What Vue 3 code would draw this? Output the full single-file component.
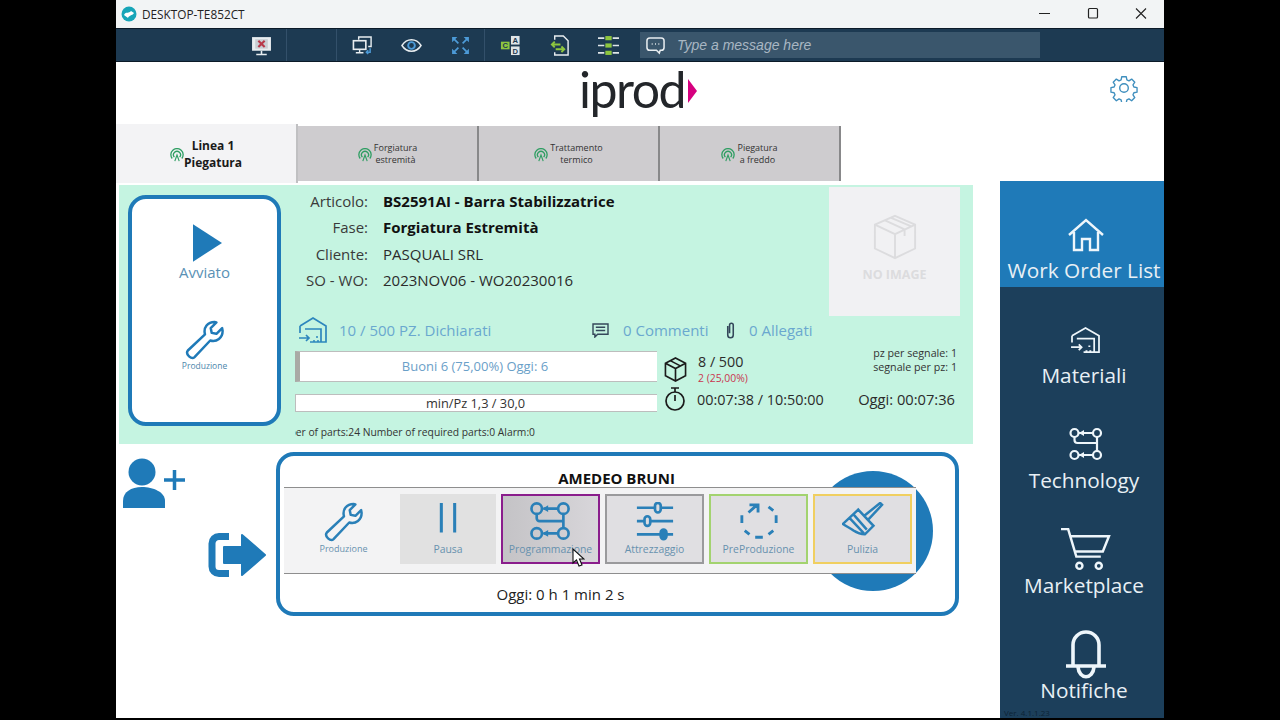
<template>
  <div class="window">
    <div class="titlebar">
      <svg class="app-icon" viewBox="0 0 16 16"><circle cx="8" cy="8" r="7.500" fill="#17a5b8"/><path d="M3 9c2-4 5-1 7-4l3 2c-2 3-5 2-6 5-1-1-3-2-4-3z" fill="#fff"/></svg>
      <span class="host">DESKTOP-TE852CT</span>
      <div class="win-controls">
        <svg viewBox="0 0 48 28"><path d="M18 13.500h11" stroke="#222" fill="none"/></svg>
        <svg viewBox="0 0 48 28"><rect x="19.500" y="8.500" width="9" height="9.500" rx="1" stroke="#222" fill="none" stroke-width="1.200"/></svg>
        <svg viewBox="0 0 48 28"><path d="M19 8.500l10 10M29 8.500l-10 10" stroke="#222" fill="none" stroke-width="1.100"/></svg>
      </div>
    </div>

    <div class="toolbar">
      <div class="tool-group first">
        <svg class="tool" viewBox="0 0 20 20"><rect x="1" y="2" width="18" height="13" fill="#e8edf0"/><rect x="4" y="4" width="12" height="9" fill="#c9ced4"/><path d="M7 5.500l6 6M13 5.500l-6 6" stroke="#b8394a" stroke-width="2"/><path d="M10 15v3M5 18.500h10" stroke="#e8edf0" stroke-width="1.500"/></svg>
      </div>
      <div class="tool-group second">
        <svg class="tool" viewBox="0 0 22 20"><path d="M7 4V1h13v10h-3" stroke="#e8edf0" stroke-width="1.500" fill="none"/><rect x="1.500" y="5" width="13" height="9" stroke="#e8edf0" stroke-width="1.700" fill="#1d3a52"/><path d="M8 14v3M4 17.500h8" stroke="#e8edf0" stroke-width="1.500"/><path d="M19 13v4h-4m2-2l-2 2 2 2" stroke="#4d9bd8" stroke-width="1.500" fill="none"/></svg>
        <svg class="tool" viewBox="0 0 22 20"><path d="M1 10c5-8 15-8 20 0-5 8-15 8-20 0z" stroke="#e8edf0" stroke-width="1.500" fill="none"/><circle cx="11" cy="10" r="3.500" stroke="#4d9bd8" stroke-width="2" fill="none"/></svg>
        <svg class="tool" viewBox="0 0 20 20"><path d="M2 2h5L2 7zM18 2h-5l5 5zM2 18h5l-5-5zM18 18h-5l5-5z" fill="#4d9bd8"/><path d="M3 3l5 5M17 3l-5 5M3 17l5-5M17 17l-5-5" stroke="#4d9bd8" stroke-width="1.600"/></svg>
      </div>
      <div class="tool-group third">
        <svg class="tool" viewBox="0 0 22 22"><rect x="1" y="7" width="9" height="8" fill="#8dc63f"/><rect x="11.500" y="1" width="9" height="9" fill="#dfe5e8"/><rect x="11.500" y="12" width="9" height="9" fill="#dfe5e8"/><text x="5.500" y="13.500" class="cad">C</text><text x="16" y="8.500" class="cad">A</text><text x="16" y="19.500" class="cad">D</text></svg>
        <svg class="tool" viewBox="0 0 20 22"><path d="M5 5V1h9l5 5v15H5v-3" stroke="#e8edf0" stroke-width="1.500" fill="none"/><path d="M2 10h9M5 7l-3 3 3 3" stroke="#8dc63f" stroke-width="2" fill="none"/><path d="M6 15h9M12 12l3 3-3 3" stroke="#8dc63f" stroke-width="2" fill="none"/></svg>
        <svg class="tool" viewBox="0 0 20 20"><path d="M0 3h6M14 3h6M0 10h6M14 10h6M0 17h6M14 17h6" stroke="#dfe5e8" stroke-width="1.600"/><rect x="7" y="1" width="6" height="4" fill="#8dc63f"/><rect x="7" y="8" width="6" height="4" fill="#8dc63f"/><rect x="7" y="15" width="6" height="4" fill="#8dc63f"/></svg>
      </div>
      <div class="msg-box">
        <svg class="chat" viewBox="0 0 20 20"><path d="M4 2h12a3 3 0 0 1 3 3v7a3 3 0 0 1-3 3h-1l-1 3-3-3H4a3 3 0 0 1-3-3V5a3 3 0 0 1 3-3z" stroke="#e8edf0" stroke-width="1.600" fill="none"/><path d="M6 8.500h1M9.500 8.500h1M13 8.500h1" stroke="#e8edf0" stroke-width="1.600"/></svg>
        <span>Type a message here</span>
      </div>
    </div>

    <div class="app-head">
      <div class="logo"><span>iprod</span><i class="logo-arrow"></i></div>
      <svg class="gear" viewBox="0 0 28 28"><path d="M11.500 1.500h5l.7 3.600 2.300 1 3-2 3.500 3.500-2 3 1 2.300 3.500.7v5l-3.500.7-1 2.300 2 3-3.500 3.500-3-2-2.300 1-.7 3.500h-5l-.7-3.500-2.300-1-3 2-3.500-3.500 2-3-1-2.300-3.500-.7v-5l3.500-.7 1-2.300-2-3 3.500-3.500 3 2 2.300-1z" transform="translate(1.400 1.400) scale(.9)" fill="none" stroke="#3f8fbe" stroke-width="1.500" stroke-linejoin="round"/><circle cx="14" cy="14" r="4.300" fill="none" stroke="#3f8fbe" stroke-width="1.400"/></svg>
    </div>

    <div class="main">
      <div class="left">
        <div class="tabs">
          <div v-for="tab in tabs" :key="tab.id" class="tab" :class="{ active: tab.active }">
            <svg class="signal" viewBox="0 0 16 16"><path d="M2.500 12A7 7 0 1 1 13.500 12M5 10.500a4 4 0 1 1 6 0" fill="none" stroke="#2f9e63" stroke-width="1.500"/><path d="M5.500 15L8 8l2.500 7" fill="none" stroke="#2f9e63" stroke-width="1.300"/></svg>
            <div class="tab-label">{{ tab.line1 }}<br />{{ tab.line2 }}</div>
          </div>
        </div>

        <div class="status-panel">
          <div class="state-card">
            <div class="state-item">
              <svg class="play" viewBox="0 0 28 36"><path d="M0 0l28 18L0 36z" fill="#1f7ab8"/></svg>
              <div class="state-text">Avviato</div>
            </div>
            <div class="state-item second-state">
              <svg class="wrench" viewBox="0 0 44 42"><path d="M4 32L22 15c-2-7 3-13 10-13l2 .5-6 6 1 5 5 1 6-6 .5 3c0 7-6 12-13 10L11 39c-3 3-10-3-7-7z" fill="none" stroke="#1f7ab8" stroke-width="2.600" stroke-linejoin="round"/></svg>
              <div class="state-small">Produzione</div>
            </div>
          </div>

          <div class="details">
            <div class="top-row">
              <div class="info">
                <div v-for="row in infoRows" :key="row.label" class="info-row">
                  <span class="info-label">{{ row.label }}</span>
                  <span class="info-value" :class="{ strong: row.strong }">{{ row.value }}</span>
                </div>
              </div>
              <div class="no-image">
                <svg viewBox="0 0 48 48"><path d="M24 2L45 11v25L24 46 3 36V11zM3 11l21 10 21-10M24 21v25M13 6.500L34 16v7M20 4l21 9" fill="none" stroke="#dcdcde" stroke-width="2"/></svg>
                <div>NO IMAGE</div>
              </div>
            </div>

            <div class="links-row">
              <div class="declared">
                <svg class="store" viewBox="0 0 30 26"><path d="M2 9L15 1l13 8v16H12M2 9v7M7 12h16v13" fill="none" stroke="#2d86bd" stroke-width="1.700"/><path d="M1 21h10M8 18l3 3-3 3" fill="none" stroke="#2d86bd" stroke-width="1.700"/><path d="M15 24h2M19 24h2M18 20h2" stroke="#2d86bd" stroke-width="1.700"/></svg>
                <span>10 / 500 PZ. Dichiarati</span>
              </div>
              <div class="link comments">
                <svg viewBox="0 0 18 16"><path d="M1 1h16v11H6l-3 3v-3H1zM4 4.500h10M4 8h10" fill="none" stroke="#34475a" stroke-width="1.500"/></svg>
                <span>0 Commenti</span>
              </div>
              <div class="link attach">
                <svg viewBox="0 0 12 20"><path d="M3 5v10a3 3 0 0 0 6 0V4a2 2 0 0 0-4 0v9" fill="none" stroke="#34475a" stroke-width="1.700"/></svg>
                <span>0 Allegati</span>
              </div>
            </div>

            <div class="bars">
              <div class="bar-col">
                <div class="good-bar">Buoni 6 (75,00%) Oggi: 6</div>
                <div class="time-bar">min/Pz 1,3 / 30,0</div>
              </div>
              <div class="stat-col">
                <div class="stat-top">
                  <svg class="box" viewBox="0 0 24 26"><path d="M12 1l10.500 5.500v13L12 25 1.500 19.500v-13zM1.500 6.500L12 12l10.500-5.500M12 12v13M7 4l10.500 5.500" fill="none" stroke="#1b1b1b" stroke-width="1.700"/></svg>
                  <div>
                    <div class="count">8 / 500</div>
                    <div class="scrap">2 (25,00%)</div>
                  </div>
                  <div class="signal-info">pz per segnale: 1<br />segnale per pz: 1</div>
                </div>
                <div class="stat-bottom">
                  <svg class="timer" viewBox="0 0 22 24"><path d="M7 1h8M11 1v4" stroke="#1b1b1b" stroke-width="1.700"/><circle cx="11" cy="14" r="9" fill="none" stroke="#1b1b1b" stroke-width="1.700"/><path d="M11 8v6" stroke="#1b1b1b" stroke-width="1.700"/></svg>
                  <span class="elapsed">00:07:38 / 10:50:00</span>
                  <span class="today">Oggi: 00:07:36</span>
                </div>
              </div>
            </div>

            <div class="parts-line"><span>Number of parts:24 Number of required parts:0 Alarm:0</span></div>
          </div>
        </div>

        <div class="bottom">
          <div class="actions">
            <svg class="user-add" viewBox="0 0 64 52"><circle cx="20" cy="14" r="13.500" fill="#1f7ab8"/><path d="M1 50V43C1 34 9 29 20 29s23 5 23 14v7z" fill="#1f7ab8"/><path d="M42 22h21M52.500 12v20" stroke="#1f7ab8" stroke-width="3.500"/></svg>
            <svg class="logout" viewBox="0 0 59 44"><path d="M21 3.500H11a7 7 0 0 0-7 7v23a7 7 0 0 0 7 7h10" fill="none" stroke="#1f7ab8" stroke-width="7"/><path d="M16 14h18V2l23 20-23 20V30H16z" fill="#1f7ab8" stroke="#1f7ab8" stroke-width="2" stroke-linejoin="round"/></svg>
          </div>

          <div class="operator">
            <i class="circle"></i>
            <div class="operator-name">AMEDEO BRUNI</div>
            <div class="strip">
              <div v-for="btn in buttons" :key="btn.label" class="op-btn" :class="btn.cls">
                <svg v-if="btn.icon === 'wrench'" class="op-icon" viewBox="0 0 44 42"><path d="M4 32L22 15c-2-7 3-13 10-13l2 .5-6 6 1 5 5 1 6-6 .5 3c0 7-6 12-13 10L11 39c-3 3-10-3-7-7z" fill="none" stroke="#2a80b8" stroke-width="2.600" stroke-linejoin="round"/></svg>
                <svg v-else-if="btn.icon === 'pause'" class="op-icon" viewBox="0 0 44 42"><path d="M15 1v31M29 1v31" stroke="#2a80b8" stroke-width="3.200"/></svg>
                <svg v-else-if="btn.icon === 'flow'" class="op-icon" viewBox="0 0 44 42"><g fill="none" stroke="#2a80b8" stroke-width="2.800"><circle cx="7" cy="7" r="5.500"/><circle cx="35" cy="7" r="5.500"/><circle cx="7" cy="33" r="5.500"/><circle cx="35" cy="33" r="5.500"/><path d="M14 7h15M14 33h15M7 13v4a3 3 0 0 0 3 3h25v7M35 13v7"/></g><path d="M13 7l6-3.500v7zM13 33l6-3.500v7z" fill="#2a80b8"/></svg>
                <svg v-else-if="btn.icon === 'sliders'" class="op-icon" viewBox="0 0 44 42"><g stroke="#2a80b8" stroke-width="2.800" fill="#2a80b8"><path d="M3 6h38M3 20h38M3 34h38"/><rect x="22" y="1" width="6" height="10" rx="3" fill="#dcdce0"/><rect x="11" y="15" width="6" height="10" rx="3" fill="#dcdce0"/><rect x="28" y="29" width="6" height="10" rx="3"/></g></svg>
                <svg v-else-if="btn.icon === 'cycle'" class="op-icon" viewBox="0 0 44 42"><g fill="none" stroke="#2a80b8" stroke-width="3"><path d="M4 14v8M40 14v8M7 30l5 4M18 37h8M37 30l-5 4M32 5l5 4M11 11l9-8M12 3h9v8"/></g></svg>
                <svg v-else class="op-icon" viewBox="0 0 44 42"><g fill="none" stroke="#2a80b8" stroke-width="2.600"><path d="M1 23L17 8l16 17-9 9c-6 0-9-2-12-4-4-3-7-4-11-7zM24 14L40 1l2 2-15 16M8 17l15 16M12 13l14 16" /></g></svg>
                <div class="op-label">{{ btn.label }}</div>
                <svg v-if="btn.cls === 'selected'" class="cursor" viewBox="0 0 13 20"><path d="M1 1v14l3.500-3 2.500 6 3-1-2.500-6H12z" fill="#fff" stroke="#111" stroke-width="1.100"/></svg>
              </div>
            </div>
            <div class="today-total">Oggi: 0 h 1 min 2 s</div>
          </div>
        </div>
      </div>

      <div class="sidebar">
        <div class="side-item current">
          <svg class="i-home" viewBox="0 0 36 34"><path d="M1 17L18 2l17 15M6 14v18h8V21h8v11h8V14" fill="none" stroke="#eef6fb" stroke-width="2.400"/></svg>
          <span>Work Order List</span>
        </div>
        <div class="side-item">
          <svg class="i-store" viewBox="0 0 32 28"><path d="M2 10L16 2l14 8v17H14M2 10v7M7 13h18v14" fill="none" stroke="#eef6fb" stroke-width="1.800"/><path d="M1 22h11M9 19l3 3-3 3" fill="none" stroke="#eef6fb" stroke-width="1.800"/><path d="M16 26h2M20 26h2M19 21h2" stroke="#eef6fb" stroke-width="1.800"/></svg>
          <span>Materiali</span>
        </div>
        <div class="side-item">
          <svg class="i-flow" viewBox="0 0 34 34"><g fill="none" stroke="#eef6fb" stroke-width="2.200"><circle cx="5.500" cy="6" r="4"/><circle cx="28" cy="6" r="4"/><circle cx="5.500" cy="28" r="4"/><circle cx="28" cy="28" r="4"/><path d="M10 6h14M10 28h14M5.500 10v3a3 3 0 0 0 3 3H28v8M28 10v6"/></g><path d="M10 6l5-3v6zM10 28l5-3v6z" fill="#eef6fb"/></svg>
          <span>Technology</span>
        </div>
        <div class="side-item">
          <svg class="i-cart" viewBox="0 0 50 42"><g fill="none" stroke="#eef6fb" stroke-width="2.400"><path d="M1 1h7l8 27h24M10 8h38l-6 15H15"/><circle cx="19" cy="37" r="3"/><circle cx="38" cy="37" r="3"/></g></svg>
          <span>Marketplace</span>
        </div>
        <div class="side-item">
          <svg class="i-bell" viewBox="0 0 40 50"><g fill="none" stroke="#eef6fb" stroke-width="3.600"><path d="M7 36V15a13 13 0 0 1 26 0v21M0 36h40M12 37c1 13 15 13 16 0"/></g></svg>
          <span>Notifiche</span>
        </div>
        <div class="version">Ver. 4.1.1.23</div>
      </div>
    </div>
  </div>
</template>

<script setup>
const tabs = [
  { id: 1, line1: "Linea 1", line2: "Piegatura", active: true },
  { id: 2, line1: "Forgiatura", line2: "estremità" },
  { id: 3, line1: "Trattamento", line2: "termico" },
  { id: 4, line1: "Piegatura", line2: "a freddo" },
];

const infoRows = [
  { label: "Articolo:", value: "BS2591AI - Barra Stabilizzatrice", strong: true },
  { label: "Fase:", value: "Forgiatura Estremità", strong: true },
  { label: "Cliente:", value: "PASQUALI SRL" },
  { label: "SO - WO:", value: "2023NOV06 - WO20230016" },
];

const buttons = [
  { label: "Produzione", icon: "wrench", cls: "plain" },
  { label: "Pausa", icon: "pause", cls: "paused" },
  { label: "Programmazione", icon: "flow", cls: "selected" },
  { label: "Attrezzaggio", icon: "sliders", cls: "gray" },
  { label: "PreProduzione", icon: "cycle", cls: "green" },
  { label: "Pulizia", icon: "brush", cls: "yellow" },
];
</script>

<style>
html,
body {
  background: #000;
}
</style>

<style scoped>
* {
  box-sizing: border-box;
}

.window {
  width: 1048px;
  height: 718px;
  margin-left: 116px;
  background: #fff;
  font-family: "Open Sans", "Noto Sans", sans-serif;
  overflow: hidden;
}

.titlebar {
  height: 28px;
  background: #f2f4f5;
  display: flex;
  align-items: center;
  padding-left: 5px;
}

.app-icon {
  width: 16px;
  height: 16px;
}

.host {
  margin-left: 5px;
  font-size: 11.800px;
  color: #222;
}

.win-controls {
  margin-left: auto;
  margin-right: -1px;
  display: flex;
}

.win-controls svg {
  width: 48px;
  height: 28px;
}

.toolbar {
  height: 34px;
  background: #1d3a52;
  border-top: 1px solid #0b1a28;
  border-bottom: 1px solid #0b1a28;
  display: flex;
  align-items: center;
}

.tool-group {
  height: 100%;
  display: flex;
  align-items: center;
  flex: none;
  border-right: 1px solid #33506a;
}

.tool-group.first {
  width: 171px;
  justify-content: flex-end;
  padding-right: 14px;
}

.tool-group.second {
  width: 149px;
  margin-left: 49px;
  gap: 28px;
  padding-left: 15px;
  border-left: 1px solid #33506a;
}

.tool-group.third {
  width: 155px;
  border-right: none;
  gap: 28px;
  padding-left: 15px;
}

.tool {
  width: 21px;
  height: 21px;
  flex: none;
}

.cad {
  font-family: "Liberation Sans", sans-serif;
  font-size: 8px;
  font-weight: 700;
  text-anchor: middle;
  fill: #1d3a52;
}

.msg-box {
  width: 400px;
  height: 26px;
  background: #3a566c;
  display: flex;
  align-items: center;
  padding-left: 6px;
  color: #a9b7c3;
  font-family: "Liberation Sans", sans-serif;
  font-style: italic;
  font-size: 14px;
}

.chat {
  width: 19px;
  height: 19px;
  margin-right: 12px;
}

.app-head {
  height: 62px;
  position: relative;
  display: flex;
  justify-content: center;
}

.logo {
  display: flex;
  align-items: flex-start;
  font-family: Lato, sans-serif;
  font-size: 50px;
  line-height: 55px;
  letter-spacing: -1.500px;
  color: #23262a;
  margin-right: 4px;
}

.logo-arrow {
  width: 0;
  height: 0;
  margin: 17px 0 0 3px;
  border-left: 9px solid #d6007f;
  border-top: 12px solid transparent;
  border-bottom: 12px solid transparent;
}

.gear {
  position: absolute;
  right: 26px;
  top: 12px;
  width: 28px;
  height: 28px;
}

.main {
  display: flex;
  height: 594px;
}

.left {
  width: 884px;
}

.tabs {
  display: flex;
  height: 61px;
  padding-top: 2px;
}

.tab {
  width: 181px;
  height: 55px;
  background: #cecccf;
  border-right: 2px solid #88888a;
  display: flex;
  align-items: center;
  justify-content: center;
  gap: 2px;
  font-size: 9px;
  line-height: 12px;
  color: #333;
  text-align: center;
}

.tab.active {
  width: 182px;
  height: 59px;
  margin-top: -2px;
  background: #f3f3f5;
  border-right-color: #c0c0c2;
  font-size: 12px;
  line-height: 17px;
  font-weight: 700;
  color: #1a1a1a;
  gap: 0;
}

.signal {
  width: 14px;
  height: 14px;
  margin-top: 2px;
}

.status-panel {
  width: 854px;
  height: 259px;
  margin-left: 3px;
  background: #c5f4e1;
  display: flex;
}

.state-card {
  width: 153px;
  height: 231px;
  margin: 10px 0 0 9px;
  background: #fff;
  border: 4px solid #1f7ab8;
  border-radius: 18px;
  display: flex;
  flex-direction: column;
  align-items: center;
  padding-top: 25px;
  flex: none;
}

.state-item {
  display: flex;
  flex-direction: column;
  align-items: center;
}

.play {
  width: 29px;
  height: 38px;
  display: block;
  margin-left: 6px;
}

.state-text {
  font-size: 15px;
  line-height: 18px;
  margin-top: 1px;
  color: #5a91b5;
}

.second-state {
  margin-top: 39px;
}

.wrench {
  width: 44px;
  height: 40px;
}

.state-small {
  font-size: 8.500px;
  line-height: 12px;
  margin-top: 0;
  color: #4c86ab;
}

.details {
  width: 679px;
  margin-left: 14px;
  flex: none;
}

.top-row {
  height: 133px;
  display: flex;
  justify-content: space-between;
}

.info {
  padding-top: 3px;
}

.info-row {
  display: flex;
  height: 26.300px;
  align-items: center;
  font-size: 15px;
  color: #3a3a3a;
}

.info-label {
  width: 73px;
  text-align: right;
  margin-right: 15px;
}

.info-value {
  color: #2b2b2b;
}

.info-value.strong {
  font-weight: 700;
  color: #111;
}

.no-image {
  width: 131px;
  height: 129px;
  margin-top: 2px;
  margin-right: 14px;
  background: #f1f1f3;
  display: flex;
  flex-direction: column;
  align-items: center;
  padding-top: 27px;
  color: #dcdcde;
  font-size: 12.500px;
  font-weight: 700;
}

.no-image svg {
  width: 46px;
  height: 46px;
  margin-bottom: 6px;
}

.links-row {
  height: 33px;
  padding-bottom: 9px;
  display: flex;
  align-items: center;
  color: #6aa8cf;
  font-size: 15px;
}

.declared {
  width: 297px;
  display: flex;
  align-items: center;
  gap: 11px;
  padding-left: 3px;
}

.store {
  width: 30px;
  height: 26px;
}

.link {
  display: flex;
  align-items: center;
}

.comments {
  gap: 14px;
  width: 133px;
}

.comments svg {
  width: 17px;
  height: 15px;
}

.attach {
  gap: 13px;
}

.attach svg {
  width: 11px;
  height: 19px;
}

.bars {
  display: flex;
}

.bar-col {
  width: 362px;
}

.good-bar {
  height: 31px;
  background: #fff;
  border-left: 5px solid #a9aaa5;
  border-top: 1px solid #bdbdbd;
  border-bottom: 1px solid #bdbdbd;
  display: flex;
  align-items: center;
  justify-content: center;
  padding: 0 7px 2px 0;
  font-size: 13px;
  color: #6aa0c8;
}

.time-bar {
  height: 18px;
  margin-top: 12px;
  background: #fff;
  border: 1px solid #bdbdbd;
  border-right: none;
  display: flex;
  align-items: center;
  justify-content: center;
  padding-right: 2px;
  font-size: 12.800px;
  color: #333;
}

.stat-col {
  flex: 1;
  padding-left: 7px;
  color: #2b2b2b;
}

.stat-top {
  display: flex;
  height: 36px;
  align-items: flex-start;
}

.box {
  width: 23px;
  height: 25px;
  margin: 6px 11px 0 0;
  flex: none;
}

.count {
  font-size: 14.300px;
  line-height: 18px;
  margin-top: 2px;
}

.scrap {
  font-size: 10.400px;
  line-height: 11px;
  margin-top: 2px;
  color: #c9374f;
}

.signal-info {
  margin-left: auto;
  margin-right: 17px;
  text-align: right;
  font-size: 10.700px;
  line-height: 14px;
  color: #333;
  position: relative;
  top: -5px;
}

.stat-bottom {
  display: flex;
  align-items: center;
  height: 24px;
  font-size: 14.400px;
}

.timer {
  width: 22px;
  height: 24px;
  margin-right: 11px;
}

.elapsed {
  width: 160px;
}

.today {
  margin-left: auto;
  margin-right: 19px;
  font-size: 14.700px;
}

.parts-line {
  width: 240px;
  margin-top: 13px;
  overflow: hidden;
  white-space: nowrap;
  display: flex;
  justify-content: flex-end;
  font-size: 10.300px;
  line-height: 14px;
  color: #333;
}

.parts-line span {
  flex: none;
}

.bottom {
  display: flex;
  margin-top: 8px;
}

.actions {
  width: 160px;
  display: flex;
  flex-direction: column;
  flex: none;
}

.user-add {
  width: 64px;
  height: 52px;
  margin: 6px 0 0 6px;
}

.logout {
  width: 59px;
  height: 44px;
  margin: 23px 0 0 92px;
}

.operator {
  width: 683px;
  height: 164px;
  border: 4px solid #1f7ab8;
  border-radius: 18px;
  position: relative;
  padding: 14px 0 0 4px;
}

.circle {
  position: absolute;
  left: 533px;
  top: 15px;
  width: 120px;
  height: 120px;
  border-radius: 50%;
  background: #1f7ab8;
}

.operator-name {
  position: relative;
  padding-right: 6px;
  text-align: center;
  font-size: 15px;
  line-height: 17px;
  font-weight: 700;
  color: #111;
}

.strip {
  position: relative;
  width: 632px;
  height: 87px;
  background: #f3f3f4;
  border-top: 1px solid #8e8e8e;
  border-bottom: 1px solid #8e8e8e;
  display: flex;
  gap: 5px;
  padding: 6px 4px 0 8px;
}

.op-btn {
  position: relative;
  width: 99px;
  height: 70px;
  border: 2px solid transparent;
  display: flex;
  flex-direction: column;
  align-items: center;
  padding-top: 6px;
  color: #6791ae;
  background: #e0dfe2;
}

.op-btn.plain {
  background: transparent;
  width: 103px;
}

.op-btn.plain .op-label {
  font-size: 9px;
}

.op-btn.paused {
  width: 96px;
  background: #e1e1e1;
}

.op-btn.selected {
  border-color: #8a1d8c;
  background: linear-gradient(90deg, #c4c3c6, #d8d6da);
}

.op-btn.gray {
  border-color: #9a9a9c;
}

.op-btn.green {
  border-color: #a3d36f;
}

.op-btn.yellow {
  border-color: #f0cf60;
}

.op-icon {
  width: 42px;
  height: 40px;
  flex: none;
}

.op-label {
  font-size: 10.400px;
  line-height: 12px;
  margin-top: 1px;
  white-space: nowrap;
}

.cursor {
  position: absolute;
  left: 69px;
  top: 52px;
  width: 13px;
  height: 20px;
}

.today-total {
  padding-right: 118px;
  margin-top: 11px;
  text-align: center;
  font-size: 15px;
  line-height: 18px;
  color: #222;
}

.sidebar {
  width: 164px;
  height: 537px;
  margin-top: 57px;
  background: #1c3f5b;
  color: #e8f0f5;
  position: relative;
}

.side-item {
  height: 105px;
  display: flex;
  flex-direction: column;
  align-items: center;
  justify-content: flex-end;
  padding: 0 0 3px 4px;
  font-size: 20.800px;
  line-height: 28px;
  white-space: nowrap;
}

.side-item.current {
  height: 106px;
  background: #1f7ab8;
}

.side-item svg {
  display: block;
  flex: none;
  margin-left: 3px;
}

.i-home {
  width: 36px;
  height: 34px;
  margin-bottom: 4px;
}

.i-store {
  width: 31px;
  height: 27px;
  margin-bottom: 8px;
}

.i-flow {
  width: 34px;
  height: 34px;
  margin-bottom: 5px;
}

.i-cart {
  width: 51px;
  height: 43px;
  margin-bottom: 0;
}

.i-bell {
  width: 40px;
  height: 50px;
  margin-bottom: -4px;
}

.version {
  position: absolute;
  left: 4px;
  bottom: 0;
  font-size: 8px;
  line-height: 10px;
  color: #0c2436;
}
</style>
